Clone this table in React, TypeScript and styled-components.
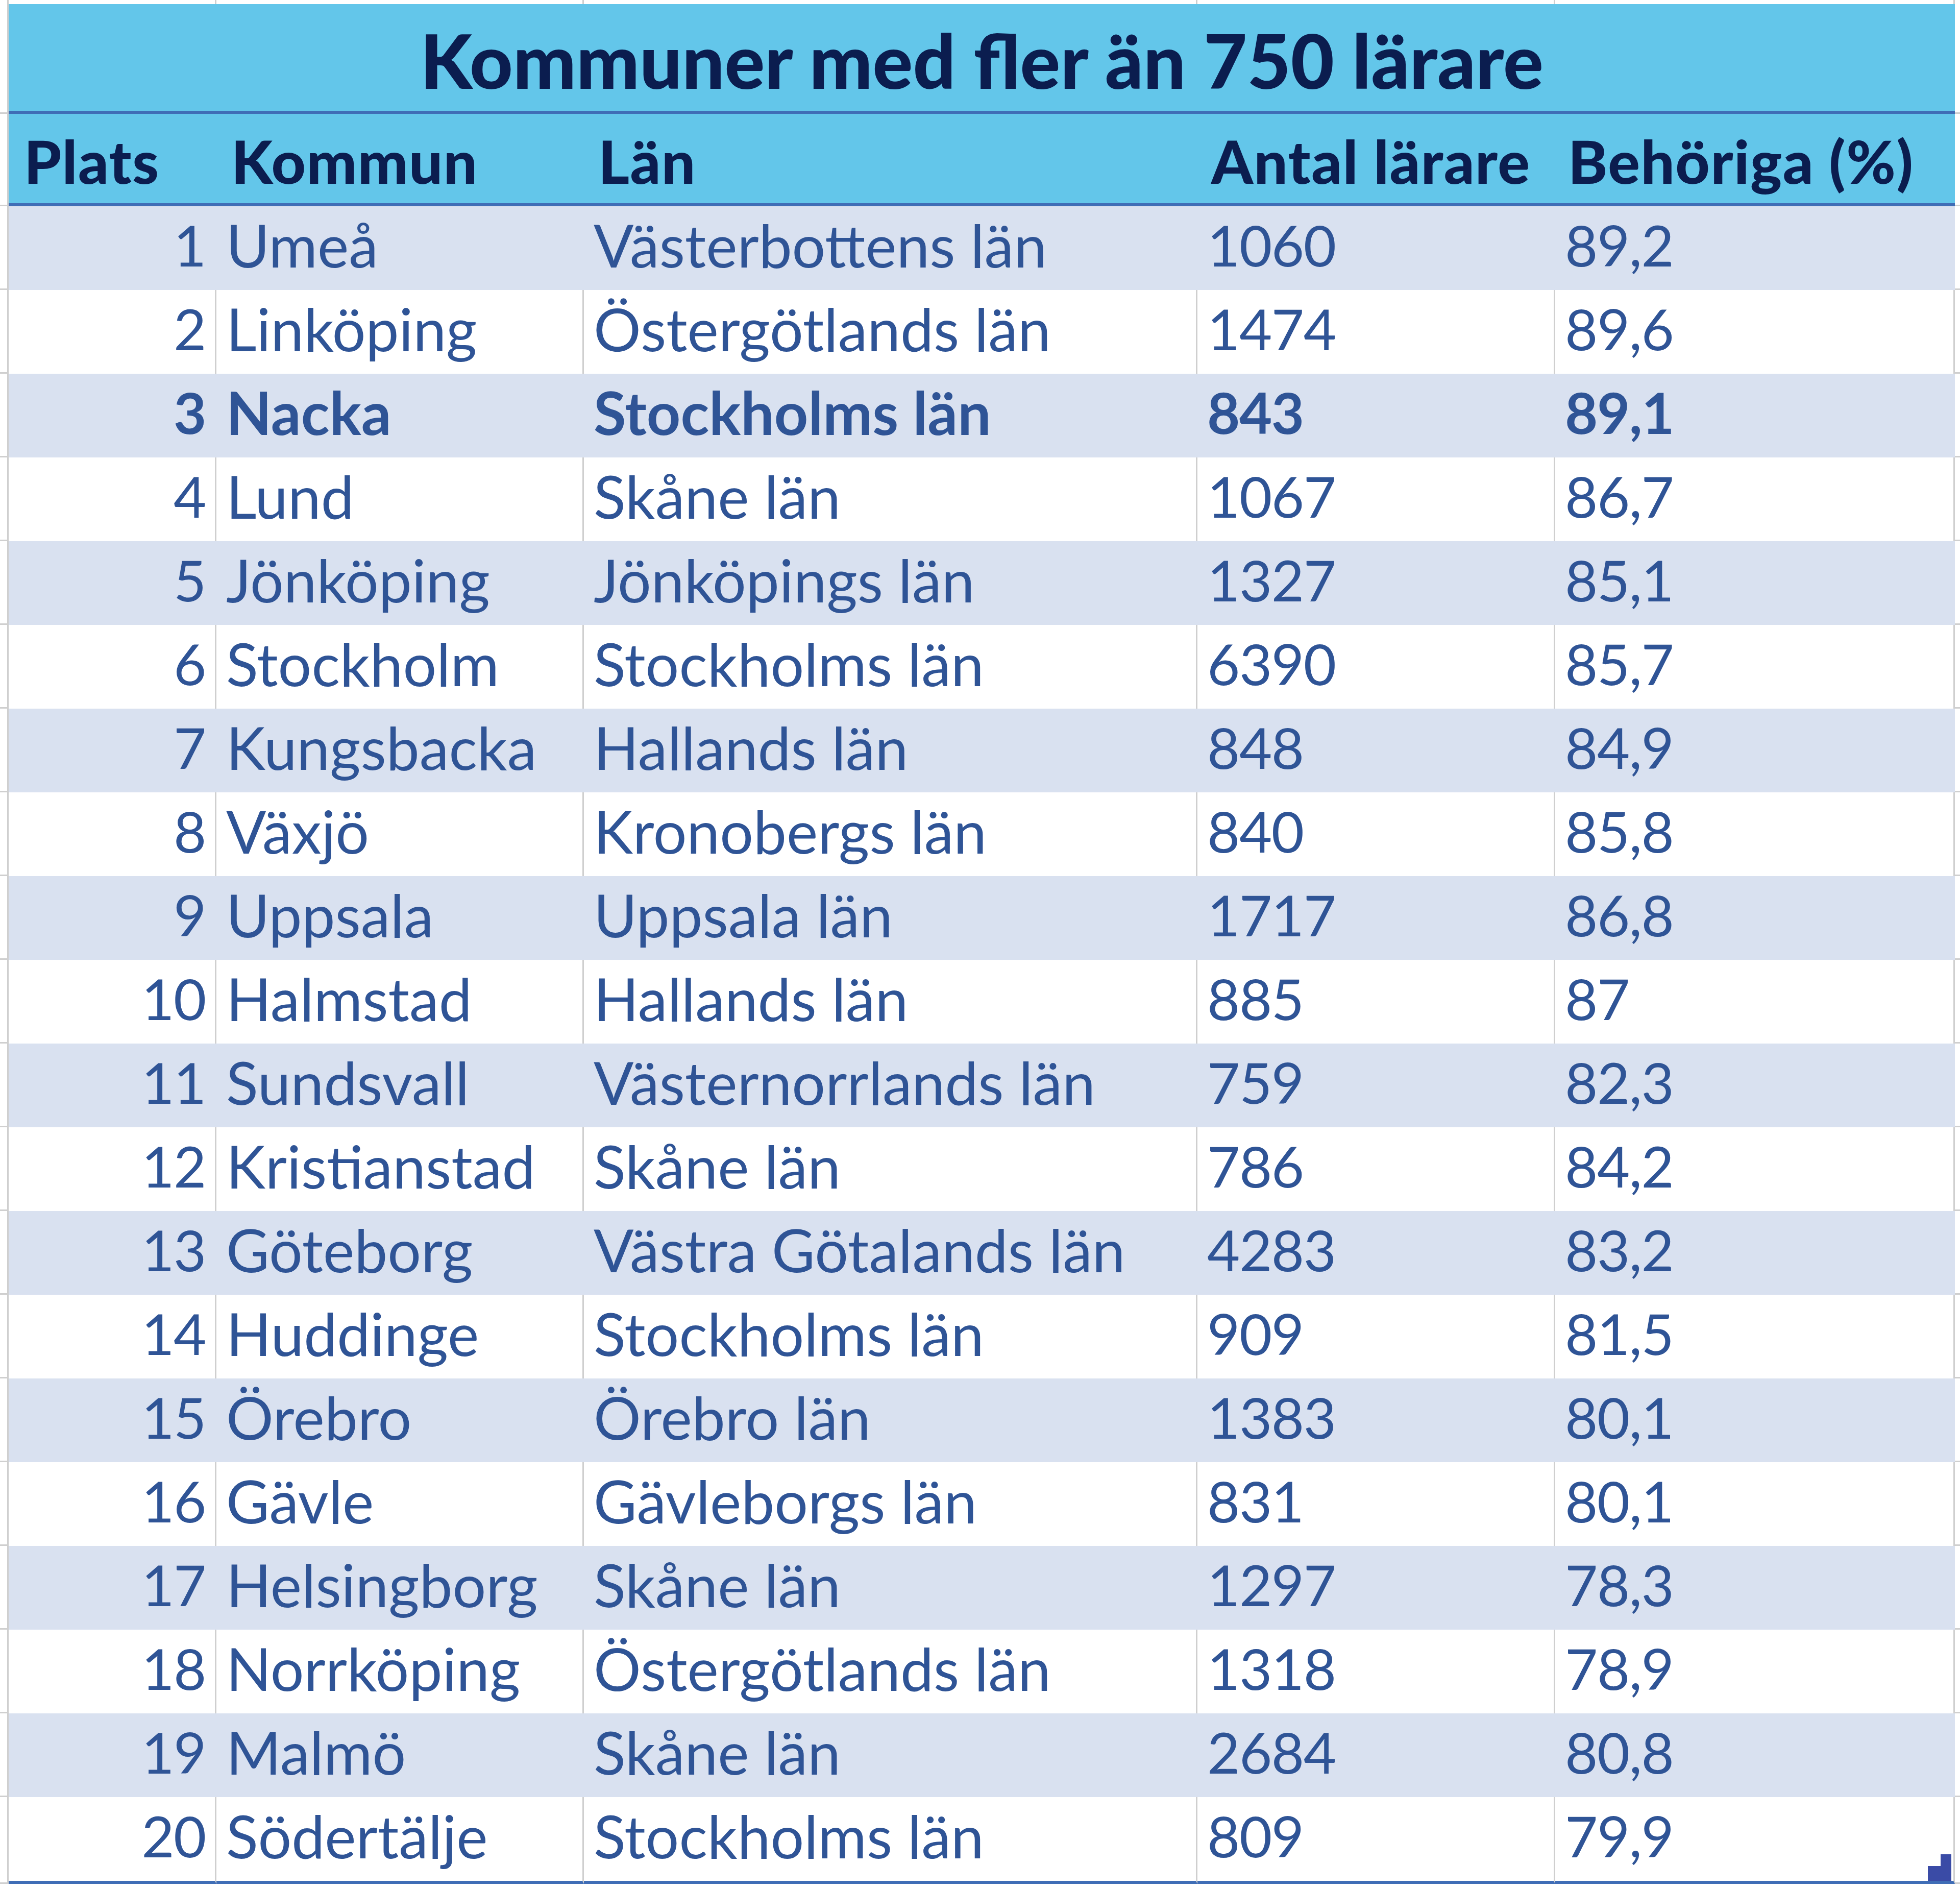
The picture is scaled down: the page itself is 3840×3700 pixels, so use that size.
import React from 'react';
import styled, {createGlobalStyle} from 'styled-components';

// column widths of the sheet: gutter, Plats, Kommun, Län, Antal, Behöriga, tail
const COLS = '17px 407px 720px 1202px 701px 783px 1fr';
const GRID = '#cfcfcf';
const LINE = '#3f6db6';
const BAND = '#d9e1f0';
const HEAD = '#63c6ea';
const NAVY = '#0b1d4f';
const TEXT = '#2f5496';

type Row = {plats: number; kommun: string; lan: string; antal: string; behoriga: string; bold?: boolean};

const rows: Row[] = [
    {plats: 1, kommun: 'Umeå', lan: 'Västerbottens län', antal: '1060', behoriga: '89,2'},
    {plats: 2, kommun: 'Linköping', lan: 'Östergötlands län', antal: '1474', behoriga: '89,6'},
    {plats: 3, kommun: 'Nacka', lan: 'Stockholms län', antal: '843', behoriga: '89,1', bold: true},
    {plats: 4, kommun: 'Lund', lan: 'Skåne län', antal: '1067', behoriga: '86,7'},
    {plats: 5, kommun: 'Jönköping', lan: 'Jönköpings län', antal: '1327', behoriga: '85,1'},
    {plats: 6, kommun: 'Stockholm', lan: 'Stockholms län', antal: '6390', behoriga: '85,7'},
    {plats: 7, kommun: 'Kungsbacka', lan: 'Hallands län', antal: '848', behoriga: '84,9'},
    {plats: 8, kommun: 'Växjö', lan: 'Kronobergs län', antal: '840', behoriga: '85,8'},
    {plats: 9, kommun: 'Uppsala', lan: 'Uppsala län', antal: '1717', behoriga: '86,8'},
    {plats: 10, kommun: 'Halmstad', lan: 'Hallands län', antal: '885', behoriga: '87'},
    {plats: 11, kommun: 'Sundsvall', lan: 'Västernorrlands län', antal: '759', behoriga: '82,3'},
    {plats: 12, kommun: 'Kristianstad', lan: 'Skåne län', antal: '786', behoriga: '84,2'},
    {plats: 13, kommun: 'Göteborg', lan: 'Västra Götalands län', antal: '4283', behoriga: '83,2'},
    {plats: 14, kommun: 'Huddinge', lan: 'Stockholms län', antal: '909', behoriga: '81,5'},
    {plats: 15, kommun: 'Örebro', lan: 'Örebro län', antal: '1383', behoriga: '80,1'},
    {plats: 16, kommun: 'Gävle', lan: 'Gävleborgs län', antal: '831', behoriga: '80,1'},
    {plats: 17, kommun: 'Helsingborg', lan: 'Skåne län', antal: '1297', behoriga: '78,3'},
    {plats: 18, kommun: 'Norrköping', lan: 'Östergötlands län', antal: '1318', behoriga: '78,9'},
    {plats: 19, kommun: 'Malmö', lan: 'Skåne län', antal: '2684', behoriga: '80,8'},
    {plats: 20, kommun: 'Södertälje', lan: 'Stockholms län', antal: '809', behoriga: '79,9'},
];

const GlobalStyle = createGlobalStyle`
    html, body {
        margin: 0;
        padding: 0;
        background: #ffffff;
    }
    body {
        font-family: Lato, "Open Sans", "Liberation Sans", sans-serif;
        width: 3840px;
        min-height: 3700px;
    }
`

const Sheet = styled.div`
    display: flex;
    flex-direction: column;
    width: 3840px;
`

const GridRow = styled.div<{$height: number}>`
    display: grid;
    grid-template-columns: ${COLS};
    height: ${props => props.$height}px;
`

const StripCell = styled.div`
    border-right: 3px solid ${GRID};
`

const Gutter = styled.div`
    border-right: 3px solid ${GRID};
    border-bottom: 3px solid ${GRID};
`

const Tail = styled.div`
    border-bottom: 3px solid ${GRID};
`

const TitleCell = styled.div`
    grid-column: 2 / 7;
    background: ${HEAD};
    border-bottom: 6px solid ${LINE};
    display: flex;
    align-items: center;
    justify-content: center;
    color: ${NAVY};
    font-weight: 900;
    font-size: 147px;
    padding-top: 8px;
    box-sizing: border-box;
`

const HeadCell = styled.div<{$pad: number}>`
    background: ${HEAD};
    border-bottom: 6px solid ${LINE};
    display: flex;
    align-items: center;
    padding-left: ${props => props.$pad}px;
    padding-top: 8px;
    box-sizing: border-box;
    color: ${NAVY};
    font-weight: 900;
    font-size: 117px;
    white-space: nowrap;
    letter-spacing: 1.5px;
`

const DataCell = styled.div<{$band: boolean; $bold?: boolean; $right?: boolean; $numeric?: boolean; $last?: boolean}>`
    position: relative;
    background: ${props => props.$band ? BAND : '#ffffff'};
    border-right: 3px solid ${props => props.$band ? BAND : GRID};
    border-bottom: ${props => props.$last ? `6px solid ${LINE}` : 'none'};
    display: flex;
    align-items: center;
    justify-content: ${props => props.$right ? 'flex-end' : 'flex-start'};
    padding: 0 ${props => props.$right ? 18 : 0}px 14px ${props => props.$right ? 0 : 19}px;
    box-sizing: border-box;
    color: ${TEXT};
    font-weight: ${props => props.$bold ? 700 : 400};
    font-size: ${props => props.$numeric ? 111 : 116}px;
    letter-spacing: ${props => props.$numeric ? -1.5 : 0}px;
    white-space: nowrap;
`

const ResizeHandle = styled.svg`
    position: absolute;
    right: 4px;
    bottom: 0;
`

const DataRow: React.FC<{row: Row; index: number}> = ({row, index}) => {
    const band = index % 2 === 0;
    const last = index === rows.length - 1;
    return (
        <GridRow $height={last ? 170 : 164}>
            <Gutter/>
            <DataCell $band={band} $bold={row.bold} $right $numeric $last={last}>{row.plats}</DataCell>
            <DataCell $band={band} $bold={row.bold} $last={last}>{row.kommun}</DataCell>
            <DataCell $band={band} $bold={row.bold} $last={last}>{row.lan}</DataCell>
            <DataCell $band={band} $bold={row.bold} $numeric $last={last}>{row.antal}</DataCell>
            <DataCell $band={band} $bold={row.bold} $numeric $last={last}>
                {row.behoriga}
                {last && (
                    <ResizeHandle width="46" height="52" viewBox="0 0 46 52">
                        <path d="M25 0H46V52H0V23H25Z" fill="#3a4ba6"/>
                    </ResizeHandle>
                )}
            </DataCell>
            <Tail/>
        </GridRow>
    );
};

export default function App() {
    return (
        <Sheet>
            <GlobalStyle/>
            <GridRow $height={8}>
                <StripCell/><StripCell/><StripCell/><StripCell/><StripCell/><StripCell/><div/>
            </GridRow>
            <GridRow $height={215}>
                <Gutter/>
                <TitleCell>Kommuner med fler än 750 lärare</TitleCell>
                <Tail/>
            </GridRow>
            <GridRow $height={181}>
                <Gutter/>
                <HeadCell $pad={30}>Plats</HeadCell>
                <HeadCell $pad={29}>Kommun</HeadCell>
                <HeadCell $pad={28}>Län</HeadCell>
                <HeadCell $pad={27}>Antal lärare</HeadCell>
                <HeadCell $pad={25}>Behöriga (%)</HeadCell>
                <Tail/>
            </GridRow>
            {rows.map((row, i) => <DataRow key={row.plats} row={row} index={i}/>)}
        </Sheet>
    );
}
